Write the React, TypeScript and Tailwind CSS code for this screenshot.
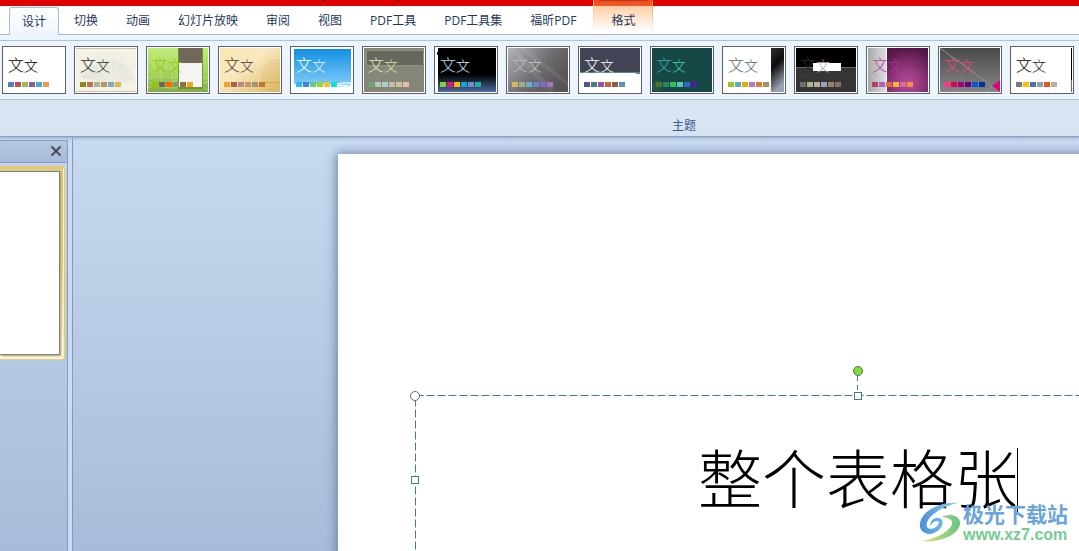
import type { ReactNode } from "react"
import { X } from "lucide-react"

type Theme = {
  name: string
  first: string
  second: string
  swatches: string[]
  art: ReactNode
}

const tabs = ["设计", "切换", "动画", "幻灯片放映", "审阅", "视图", "PDF工具", "PDF工具集", "福昕PDF"]

const themes: Theme[] = [
  {
    name: "Office",
    first: "#000000",
    second: "#000000",
    swatches: ["#4f81bd", "#c0504d", "#9bbb59", "#8064a2", "#4bacc6", "#f79646"],
    art: <rect width="60" height="44" fill="#ffffff" />,
  },
  {
    name: "暗香扑面",
    first: "#252525",
    second: "#303030",
    swatches: ["#8e8220", "#bd7651", "#b0b394", "#b89666", "#85aab9", "#e0b556"],
    art: (
      <>
        <rect width="60" height="44" fill="url(#paper)" />
        <path d="M4 30 Q18 12 36 12 Q52 13 59 32 L46 35 L38 40 L32 34 Z" fill="#e9e8de" />
        <path d="M36 38 L20 15 M36 38 L27 13 M36 38 L34 12 M36 38 L42 13 M36 38 L50 19 M36 38 L57 27" stroke="#f2f1e8" />
        <path d="M0 .5 H60 M0 43.5 H60" stroke="#c9c5a6" />
      </>
    ),
  },
  {
    name: "奥斯汀",
    first: "#94c600",
    second: "#94c600",
    swatches: ["#94c600", "#71685a", "#ff6700", "#909465", "#956b43", "#fea022"],
    art: (
      <>
        <rect width="60" height="44" fill="url(#green)" />
        <path d="M6 0 V30 M13 0 V34 M18 0 V24 M24 0 V34 M28 0 V30" stroke="#d0f0a0" opacity=".4" />
        <path d="M0 30 Q28 24 60 42 M0 40 Q30 30 60 30 M0 34 Q20 46 60 34" stroke="#c3e48b" fill="none" opacity=".6" />
        <rect x="30" width="25" height="41" fill="#71982a" />
        <rect x="31" y="15" width="23" height="24" fill="#f4f4f4" />
        <rect x="31" width="23" height="15" fill="#71685a" />
      </>
    ),
  },
  {
    name: "跋涉",
    first: "#4e3b30",
    second: "#4e3b30",
    swatches: ["#f0a22e", "#a5644e", "#b58b80", "#c3986d", "#a19574", "#c17529"],
    art: (
      <>
        <rect width="60" height="44" fill="url(#sand)" />
        <circle cx="58" cy="28" r="17" fill="#d8b65f" opacity=".2" />
        <path d="M42 34.5 H60" stroke="#e5a03b" />
      </>
    ),
  },
  {
    name: "流畅",
    first: "#ffffff",
    second: "#e1f3ff",
    swatches: ["#31b6fd", "#4584d3", "#5bd078", "#a5d028", "#f5c040", "#05e0db"],
    art: (
      <>
        <rect width="60" height="44" fill="#ffffff" />
        <rect x="2" y="1" width="57" height="35" fill="url(#sky)" />
        <path d="M38 38 Q50 34 59 35 V39 Q48 36 38 38 M42 39 Q53 36 59 39" fill="#98d7f8" stroke="#ffffff" />
      </>
    ),
  },
  {
    name: "凤舞九天",
    first: "#e7e5c2",
    second: "#dcdcae",
    swatches: ["#72a376", "#b0ccb0", "#a8cdd7", "#c0beaf", "#cec597", "#e8b7b7"],
    art: (
      <>
        <rect width="60" height="44" fill="#858878" />
        <rect x="2.5" y="2.5" width="57" height="15" rx="1" fill="#65685a" stroke="#92957f" />
      </>
    ),
  },
  {
    name: "市镇",
    first: "#b9def5",
    second: "#d0f0ff",
    swatches: ["#7fd13b", "#ea157a", "#feb80a", "#00addc", "#738ac8", "#1ab39f"],
    art: (
      <>
        <rect width="60" height="44" fill="#ffffff" />
        <rect x="2" width="58" height="44" fill="url(#night)" />
        <rect x="1" y="4" width="1" height="3" fill="#000000" />
      </>
    ),
  },
  {
    name: "夏至",
    first: "#bdb7c9",
    second: "#c9c2d1",
    swatches: ["#ceb966", "#9cb084", "#6bb1c9", "#6585cf", "#7e6bc9", "#a379bb"],
    art: (
      <>
        <rect width="60" height="44" fill="url(#smoke)" />
        <path d="M0 0 H8 L48 44 H40 Z M10 0 H18 L60 34 V38 Z" fill="#ffffff" opacity=".08" />
      </>
    ),
  },
  {
    name: "都市",
    first: "#ffffff",
    second: "#ffffff",
    swatches: ["#53548a", "#438086", "#a04da3", "#c4652d", "#8b5d3d", "#5c92b5"],
    art: (
      <>
        <rect width="60" height="44" fill="#ffffff" />
        <rect width="60" height="24" fill="#424456" />
        <path d="M0 24.5 H60 M56 25.5 H60" stroke="#568a8c" />
      </>
    ),
  },
  {
    name: "活力",
    first: "#3ba9a4",
    second: "#4ec9b5",
    swatches: ["#50742f", "#268868", "#31c060", "#55c8bd", "#3268c8", "#5018a8"],
    art: (
      <>
        <rect width="60" height="44" fill="#164845" />
        <circle cx="5" cy="38" r="5" fill="#3f6549" opacity=".5" />
      </>
    ),
  },
  {
    name: "精装书",
    first: "#566675",
    second: "#566675",
    swatches: ["#98c723", "#59b0b9", "#deae00", "#b77bb4", "#e0773c", "#a98d63"],
    art: (
      <>
        <rect width="60" height="44" fill="#ffffff" />
        <rect x="47" width="13" height="44" fill="url(#spine)" />
      </>
    ),
  },
  {
    name: "黑领结",
    first: "#302c2c",
    second: "#b7a79c",
    swatches: ["#6f6f74", "#a7b789", "#beae98", "#92a9b9", "#9c8265", "#8d6974"],
    art: (
      <>
        <rect width="60" height="44" fill="#353535" />
        <path d="M3 26 l4 4 l4 -4 l4 4 M38 26 l4 4 l4 -4 l4 4 l4 -4 M5 40 l4 -3 l4 3 M44 34 l4 4 l4 -4 l4 4" stroke="#404040" fill="none" />
        <rect width="60" height="19" fill="#000000" />
        <path d="M0 19.5 H60" stroke="#686868" />
        <rect x="17" y="15" width="28" height="8" fill="#ffffff" />
      </>
    ),
  },
  {
    name: "华丽",
    first: "#b83fac",
    second: "#a8349b",
    swatches: ["#b83d68", "#ac66bb", "#de6c36", "#f9b639", "#cf6da4", "#fa8d3d"],
    art: (
      <>
        <rect width="60" height="44" fill="url(#silver)" />
        <rect x="18" width="1" height="44" fill="#ffffff" />
        <rect x="19" width="41" height="44" fill="url(#plum)" />
      </>
    ),
  },
  {
    name: "技巧",
    first: "#ea4687",
    second: "#ea4687",
    swatches: ["#ff388c", "#e40059", "#9c007f", "#68007f", "#005bd3", "#00349e"],
    art: (
      <>
        <rect width="60" height="44" fill="url(#iron)" />
        <path d="M0 0 L60 44 M44 44 L60 33" stroke="#939393" />
        <path d="M52 38 L60 32 V44 Z" fill="#e0007a" />
      </>
    ),
  },
  {
    name: "基本",
    first: "#000000",
    second: "#202020",
    swatches: ["#7a7a7a", "#f5c201", "#526db0", "#989aac", "#dc5924", "#b4b392"],
    art: (
      <>
        <rect width="60" height="44" fill="#ffffff" />
        <rect x="59" width="1" height="32" fill="#000000" />
        <rect x="59" y="32" width="1" height="12" fill="#a05050" />
      </>
    ),
  },
]

// shared gradients, referenced by id from every thumbnail
function Gradients() {
  return (
    <svg className="absolute size-0" aria-hidden="true">
      <defs>
        <radialGradient id="paper">
          <stop offset="0" stopColor="#eceae1" />
          <stop offset="1" stopColor="#f4f2e6" />
        </radialGradient>
        <linearGradient id="green" x2="0" y2="1">
          <stop offset="0" stopColor="#c0ec79" />
          <stop offset=".55" stopColor="#a5d55b" />
          <stop offset="1" stopColor="#7fae49" />
        </linearGradient>
        <linearGradient id="sand" x2="1" y2="1">
          <stop offset="0" stopColor="#f8e6b4" />
          <stop offset=".4" stopColor="#fae9c0" />
          <stop offset="1" stopColor="#dbb868" />
        </linearGradient>
        <linearGradient id="sky" x2="0" y2="1">
          <stop offset="0" stopColor="#1290e2" />
          <stop offset="1" stopColor="#7cc9f8" />
        </linearGradient>
        <linearGradient id="night" x2="0" y2="1">
          <stop offset=".6" stopColor="#000000" />
          <stop offset="1" stopColor="#506ba0" />
        </linearGradient>
        <linearGradient id="smoke" x2="1" y2=".6">
          <stop offset="0" stopColor="#b3b0b6" />
          <stop offset=".6" stopColor="#6f6c70" />
          <stop offset="1" stopColor="#575458" />
        </linearGradient>
        <linearGradient id="spine" x2=".3" y2="1">
          <stop offset="0" stopColor="#303030" />
          <stop offset=".45" stopColor="#0c0c0c" />
          <stop offset="1" stopColor="#9aa3b2" />
        </linearGradient>
        <linearGradient id="silver" x2=".3" y2="0">
          <stop offset="0" stopColor="#a8a8a8" />
          <stop offset="1" stopColor="#dddddd" />
        </linearGradient>
        <radialGradient id="plum" cx=".5" cy=".8" r=".8">
          <stop offset="0" stopColor="#b54a9b" />
          <stop offset=".4" stopColor="#96397f" />
          <stop offset="1" stopColor="#541747" />
        </radialGradient>
        <linearGradient id="iron" x2="0" y2="1">
          <stop offset="0" stopColor="#4a4a4a" />
          <stop offset="1" stopColor="#858585" />
        </linearGradient>
      </defs>
    </svg>
  )
}

function ThemeThumb({ theme }: { theme: Theme }) {
  return (
    <button
      title={theme.name}
      className="relative flex h-12 w-16 shrink-0 flex-col justify-between border border-[#606060] bg-white px-[5px] pt-2 pb-[6px]"
    >
      <svg viewBox="0 0 60 44" className="absolute inset-px h-[44px] w-[60px]" aria-hidden="true">
        {theme.art}
      </svg>
      <span className="relative flex items-baseline leading-5 font-light">
        <span className="text-[16px]" style={{ color: theme.first }}>
          文
        </span>
        <span className="text-[14px]" style={{ color: theme.second }}>
          文
        </span>
      </span>
      <span className="relative flex gap-px">
        {theme.swatches.map((color) => (
          <span key={color} className="h-[5px] w-[6px]" style={{ backgroundColor: color }} />
        ))}
      </span>
    </button>
  )
}

function Ribbon() {
  return (
    <header className="relative z-10 text-xs text-[#1e395b] shadow-[0_1px_3px_#8fa5c3]">
      <div className="relative h-[6px] bg-[#df0000]">
        <span className="absolute top-0 left-[323px] h-px w-[2px] bg-black" />
        <span className="absolute top-0 left-[397px] h-px w-[2px] bg-black" />
      </div>
      <nav className="flex h-[29px] border-b border-[#9fb8d3] bg-white pl-2">
        {tabs.map((tab, i) =>
          i === 0 ? (
            <button
              key={tab}
              className="mx-px mt-px -mb-px rounded-t-[3px] border border-b-0 border-[#a9bfdb] bg-linear-to-b from-white to-[#edf5fd] px-3 whitespace-nowrap"
            >
              {tab}
            </button>
          ) : (
            <button key={tab} className="px-[14px] pt-[2px] whitespace-nowrap">
              {tab}
            </button>
          ),
        )}
        <button className="relative -mt-[6px] ml-[3px] w-[60px] bg-[linear-gradient(#f0481a_0px,#f05a28_6px,#ffcfa4_6px,#ffe3cb_16px,#ffffff_32px)] pt-2">
          <span className="absolute inset-y-0 left-0 w-px bg-linear-to-b from-[#ffb070] to-white" />
          <span className="absolute inset-y-0 right-0 w-px bg-linear-to-b from-[#f58a20] to-white" />
          <span className="absolute inset-x-[6px] top-0 h-px bg-[#b83c14]" />
          格式
        </button>
      </nav>
      <div className="h-[6px] border-b border-[#b0c3dd] bg-[#edf4fc]" />
      <div className="flex gap-2 overflow-hidden border-b border-[#aabfdb] bg-[#ecf5fe] pt-[5px] pb-[5px] pl-[2px]">
        {themes.map((theme) => (
          <ThemeThumb key={theme.name} theme={theme} />
        ))}
      </div>
      <div className="border-b border-[#8c9fbe] bg-linear-to-b from-[#d9e6f2] to-[#d8e3f2] pt-[18px] pb-[2px] pl-[289px] text-center text-[#3e5a91]">
        主题
      </div>
    </header>
  )
}

function SlidesPane() {
  return (
    <aside className="flex w-[73px] shrink-0 border-r border-[#7f99c4] bg-[#cbdcf1] pt-[3px] pr-1">
      <div className="flex-1 border-t border-r border-[#849dc4] bg-linear-to-b from-[#c3d6ee] to-[#a7bcd8]">
        <div className="flex h-[22px] items-center justify-end border-b border-[#849dc4] bg-linear-to-b from-[#b3c9e2] to-[#a5bbd7] pr-[3px] pb-px">
          <button aria-label="关闭" className="text-[#484c52]">
            <X size={16} strokeWidth={3} />
          </button>
        </div>
        <div className="mt-[3px] mr-[2px] rounded-r-[3px] border border-l-0 border-[#f3cc4d] bg-[#fff1ae] pr-px">
          <div className="bg-linear-to-b from-[#dccb83] via-[#e7d699] to-[#fffaf0] py-1 pr-[3px]">
            <div className="h-[184px] border border-l-0 border-[#808080] bg-white shadow-[1px_1px_2px_#a99a6a]" />
          </div>
        </div>
      </div>
    </aside>
  )
}

function Handle({ className }: { className: string }) {
  return <span className={`absolute size-2 border border-[#4574a5] bg-white ${className}`} />
}

function SlideEditor() {
  return (
    <main className="flex-1 overflow-hidden bg-linear-to-b from-[#c8daf0] to-[#a7bcd8] pt-[17px] pl-[265px]">
      <section className="h-[780px] w-[1040px] bg-white px-[77px] pt-[241px] shadow-[0_1px_10px_2px_#6c84a4]">
        <div className="relative flex h-[170px] items-center justify-center">
          <svg className="absolute inset-0 size-full overflow-visible" aria-hidden="true">
            <rect
              x=".5"
              y=".5"
              width="100%"
              height="100%"
              fill="none"
              stroke="#4574a5"
              strokeDasharray="8 3"
            />
            <path d="M442.5 -19 V-4" stroke="#4574a5" strokeDasharray="5 4" />
          </svg>
          <span className="absolute -top-[29px] left-1/2 size-[10px] -translate-x-1/2 rounded-full border border-[#5b6f5b] bg-[#7fdc33]" />
          <span className="absolute -top-1 -left-[5px] size-[10px] rounded-full border border-[#666a75] bg-white" />
          <Handle className="-top-[3px] left-1/2 -translate-x-1/2" />
          <Handle className="top-1/2 -left-1 -translate-y-1/2" />
          <h1 className="relative flex items-center font-['Liberation_Serif','Noto_Sans_CJK_SC',serif] text-[64px] leading-[80px] font-light text-black">
            <span className="pt-1">整个表格张</span>
            <span className="absolute right-0 h-16 w-px bg-black" />
          </h1>
        </div>
      </section>
    </main>
  )
}

function Watermark() {
  return (
    <div className="absolute right-[11px] bottom-[7px] flex items-center gap-[2px]">
      <svg width="42" height="42" viewBox="0 0 42 42" aria-hidden="true">
        <defs>
          <linearGradient id="swirl" x2="1" y2="0">
            <stop offset="0" stopColor="#4a8fd4" />
            <stop offset="1" stopColor="#8fd0f2" />
          </linearGradient>
          <linearGradient id="leaf" x2="1" y2="0">
            <stop offset="0" stopColor="#e3df62" />
            <stop offset="1" stopColor="#66c58c" />
          </linearGradient>
        </defs>
        <path
          d="M39 1 C22 -1 2 9 1 22 C0 30 8 34 15 31 C22 28 25 22 23 18 C19 13 11 17 11 24 C14 19 18 18 20 20 C19 26 11 29 8 25 C5 17 20 5 39 1 Z"
          fill="url(#swirl)"
        />
        <path
          d="M22 15 C30 11 40 13 41 20 C42 31 24 41 3 39 C17 37 31 29 33 22 C34 17 28 15 22 15 Z"
          fill="url(#leaf)"
        />
      </svg>
      <div className="flex flex-col">
        <span className="text-[21px] leading-6 font-bold text-[#6ba3db]">极光下载站</span>
        <span className="font-['Liberation_Sans',sans-serif] text-[16px] leading-[18px] font-bold text-[#74cc93]">
          www.xz7.com
        </span>
      </div>
    </div>
  )
}

export default function App() {
  return (
    <div className="relative flex h-screen flex-col overflow-hidden font-['Open_Sans','Noto_Sans_CJK_SC',sans-serif]">
      <Gradients />
      <Ribbon />
      <div className="flex min-h-0 flex-1">
        <SlidesPane />
        <SlideEditor />
      </div>
      <Watermark />
    </div>
  )
}
